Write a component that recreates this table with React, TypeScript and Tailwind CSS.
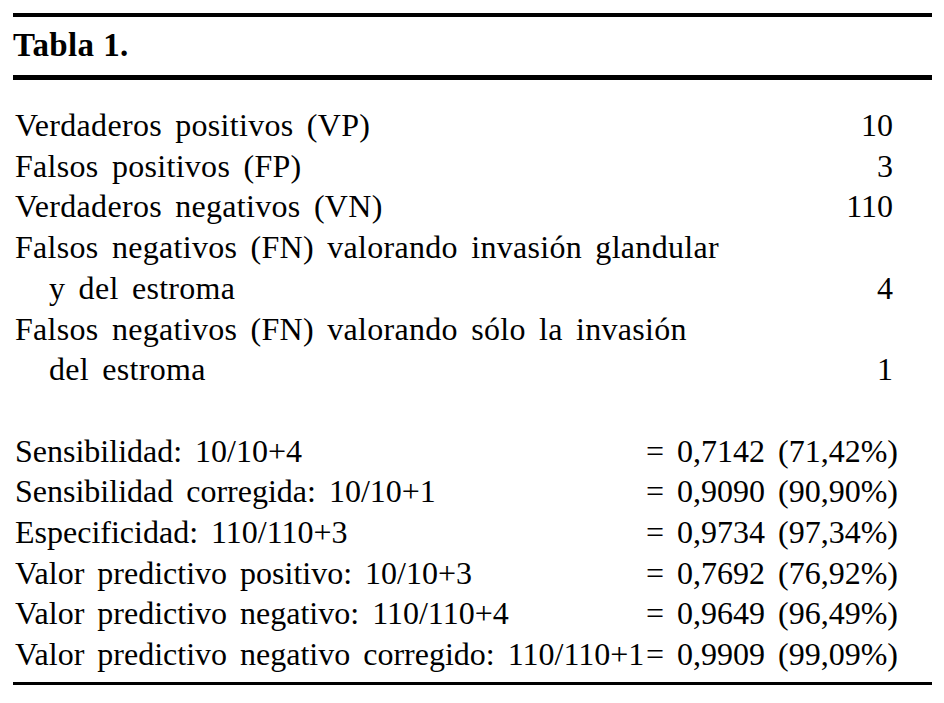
const counts = [
  { label: "Verdaderos positivos (VP)", value: "10" },
  { label: "Falsos positivos (FP)", value: "3" },
  { label: "Verdaderos negativos (VN)", value: "110" },
  { label: "Falsos negativos (FN) valorando invasión glandular", value: "" },
  { label: "y del estroma", value: "4", indent: true },
  { label: "Falsos negativos (FN) valorando sólo la invasión", value: "" },
  { label: "del estroma", value: "1", indent: true },
];

const stats = [
  { label: "Sensibilidad: 10/10+4", value: "= 0,7142 (71,42%)" },
  { label: "Sensibilidad corregida: 10/10+1", value: "= 0,9090 (90,90%)" },
  { label: "Especificidad: 110/110+3", value: "= 0,9734 (97,34%)" },
  { label: "Valor predictivo positivo: 10/10+3", value: "= 0,7692 (76,92%)" },
  { label: "Valor predictivo negativo: 110/110+4", value: "= 0,9649 (96,49%)" },
  { label: "Valor predictivo negativo corregido: 110/110+1", value: "= 0,9909 (99,09%)" },
];

export default function App() {
  return (
    <div className="w-[944px] h-[703px] bg-white pt-[13px] pl-[13px] pr-[12px] text-black font-['Liberation_Serif',serif]">
      <div className="border-t-4 border-black">
        <div className="h-[58px] flex items-center">
          <h1 className="text-[33px] font-bold tracking-[0.4px]">Tabla 1.</h1>
        </div>
      </div>
      <div className="border-t-[5px] border-b-[3px] border-black pt-[25px] pb-[7px] text-[32px] leading-[40.7px] [word-spacing:5px]">
        {counts.map((row) => (
          <div key={row.label} className="flex justify-between pl-[2px] pr-[39px]">
            <span className={row.indent ? "pl-[34px] tracking-[0.3px]" : "tracking-[0.3px]"}>{row.label}</span>
            <span>{row.value}</span>
          </div>
        ))}
        <div className="h-[40.7px]" />
        {stats.map((row) => (
          <div key={row.label} className="flex justify-between pl-[2px] pr-[34px]">
            <span>{row.label}</span>
            <span className="whitespace-nowrap">{row.value}</span>
          </div>
        ))}
      </div>
    </div>
  );
}
